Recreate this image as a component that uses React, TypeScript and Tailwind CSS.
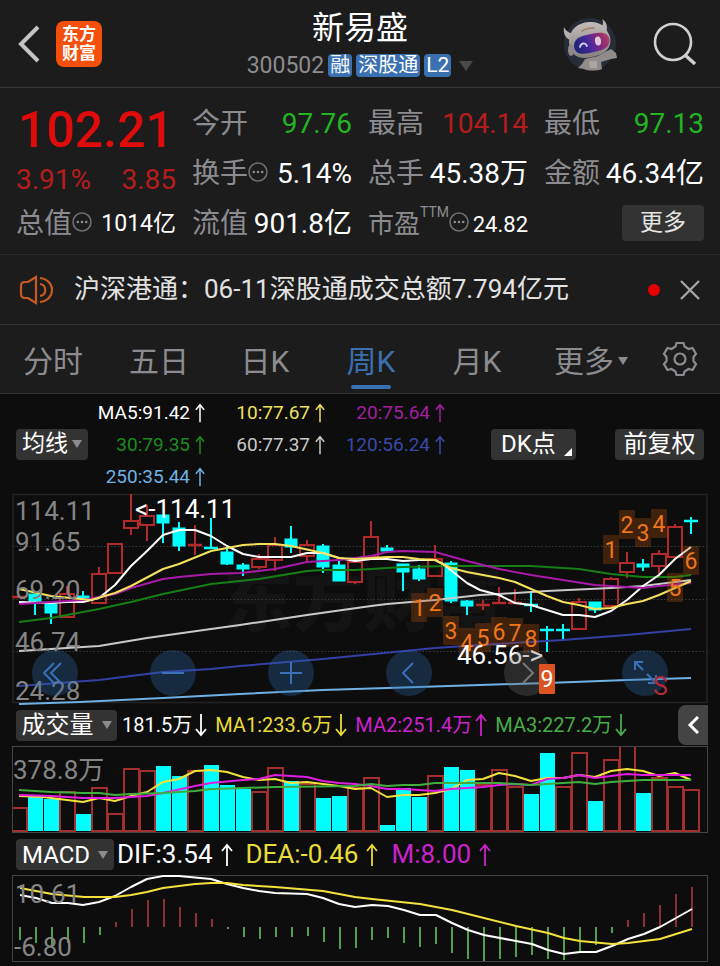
import React from "react";

const UP = "#b32a2a";
const DOWN = "#00ffff";

type Point = [number, number];

// [open/close top, bottom, wick top, wick bottom, rising]
type Candle = [number, number, number, number, boolean];

const candles: Candle[] = [
  [597, 597, 597, 597, true],
  [594, 601, 594, 615, false],
  [604, 613, 602, 624, false],
  [594, 617, 586, 617, true],
  [596, 598, 591, 598, false],
  [574, 603, 567, 603, true],
  [544, 573, 544, 573, true],
  [521, 528, 494, 535, true],
  [516, 525, 505, 541, true],
  [515, 523, 515, 543, false],
  [528, 546, 522, 551, false],
  [545, 545, 525, 555, true],
  [548, 548, 518, 548, false],
  [552, 564, 547, 565, false],
  [565, 569, 563, 576, false],
  [559, 567, 554, 569, true],
  [545, 560, 537, 571, true],
  [539, 547, 526, 553, false],
  [545, 556, 540, 563, true],
  [546, 567, 544, 573, false],
  [565, 581, 561, 581, false],
  [562, 582, 562, 584, true],
  [537, 557, 521, 557, true],
  [548, 551, 545, 553, false],
  [564, 572, 564, 591, false],
  [569, 579, 565, 581, false],
  [559, 576, 545, 576, true],
  [563, 601, 561, 603, false],
  [601, 606, 600, 615, false],
  [605, 605, 600, 610, true],
  [603, 603, 587, 603, true],
  [603, 603, 589, 603, true],
  [605, 605, 591, 612, false],
  [630, 630, 626, 652, false],
  [630, 630, 624, 639, false],
  [602, 629, 598, 629, true],
  [602, 610, 602, 613, false],
  [579, 606, 577, 606, true],
  [563, 572, 552, 578, true],
  [564, 567, 559, 571, false],
  [554, 566, 550, 578, true],
  [527, 557, 524, 557, true],
  [521, 521, 517, 534, false],
];

const priceLines: { color: string; points: Point[] }[] = [
  { color: "#c9c9c9", points: [[19, 651], [51, 649], [99, 646], [147, 638], [211, 629], [240, 625], [307, 615], [371, 606], [387, 604], [435, 600], [480, 595], [499, 594], [547, 591], [611, 588], [643, 586], [691, 580]] },
  { color: "#3440a4", points: [[19, 686], [99, 680], [163, 672], [211, 669], [240, 666], [323, 659], [435, 648], [480, 645], [563, 640], [627, 635], [659, 632], [691, 629]] },
  { color: "#6fb1e4", points: [[19, 704], [80, 702], [163, 698], [240, 694], [323, 690], [387, 688], [480, 685], [547, 683], [627, 680], [691, 678]] },
  { color: "#157f15", points: [[19, 622], [51, 618], [99, 609], [131, 602], [163, 594], [211, 584], [240, 581], [259, 579], [307, 571], [323, 570], [355, 570], [387, 568], [403, 567], [451, 566], [531, 566], [547, 567], [579, 569], [611, 574], [643, 577], [675, 577], [691, 575]] },
  { color: "#fff", points: [[19, 602], [51, 603], [67, 602], [83, 602], [99, 598], [115, 585], [131, 566], [147, 551], [163, 535], [179, 530], [195, 530], [211, 536], [227, 546], [243, 554], [259, 557], [291, 557], [307, 553], [323, 553], [339, 558], [355, 561], [371, 559], [387, 559], [403, 561], [419, 560], [435, 560], [443, 564], [467, 583], [480, 590], [499, 595], [515, 603], [531, 605], [547, 610], [563, 615], [579, 615], [595, 617], [611, 611], [627, 600], [643, 586], [659, 575], [675, 559], [691, 547]] },
  { color: "#a81aa8", points: [[19, 604], [51, 602], [83, 600], [99, 597], [115, 594], [131, 588], [163, 579], [179, 577], [211, 574], [240, 573], [275, 569], [307, 562], [339, 560], [371, 556], [387, 552], [403, 551], [435, 552], [467, 561], [499, 569], [531, 575], [563, 580], [595, 585], [627, 587], [643, 588], [659, 586], [691, 583]] },
  { color: "#f4e25c", points: [[19, 589], [51, 596], [91, 600], [115, 593], [131, 586], [163, 569], [179, 564], [211, 551], [227, 548], [243, 545], [259, 544], [275, 544], [291, 546], [323, 553], [339, 558], [355, 559], [371, 558], [387, 557], [403, 557], [419, 559], [435, 560], [451, 568], [467, 572], [483, 575], [499, 578], [515, 582], [531, 589], [547, 596], [563, 602], [579, 605], [595, 609], [611, 608], [627, 604], [643, 601], [659, 595], [675, 588], [691, 581]] },
];

// [left, top, digit]
const marks: [number, number, string][] = [
  [411, 593, "1"], [427, 588, "2"], [443, 616, "3"], [459, 628, "4"], [475, 623, "5"], [491, 617, "6"],
  [507, 618, "7"], [523, 624, "8"], [603, 535, "1"], [619, 510, "2"], [635, 518, "3"], [651, 509, "4"],
  [667, 573, "5"], [683, 546, "6"],
];

// [top of bar, rising]
const volumes: [number, boolean][] = [
  [808, true], [797, false], [799, false], [792, true], [814, false], [788, true], [814, true], [769, true],
  [771, true], [766, false], [776, false], [771, true], [765, false], [785, false], [789, false], [792, true],
  [768, true], [781, false], [784, true], [798, false], [796, false], [788, true], [778, true], [825, false],
  [788, false], [797, false], [776, true], [767, false], [770, false], [785, true], [770, true], [787, true],
  [794, false], [753, false], [787, true], [753, true], [801, false], [760, true], [740, true], [793, false],
  [778, true], [787, true], [790, true],
];

const volumeLines: { color: string; points: Point[] }[] = [
  { color: "#f4e23c", points: [[19, 796], [43, 797], [67, 800], [83, 802], [99, 798], [115, 801], [131, 796], [147, 792], [163, 782], [179, 779], [195, 771], [211, 770], [227, 772], [243, 777], [259, 780], [275, 779], [291, 783], [307, 782], [323, 784], [339, 786], [355, 789], [371, 788], [387, 797], [403, 795], [419, 795], [435, 793], [451, 789], [467, 780], [483, 779], [499, 773], [515, 776], [531, 781], [547, 778], [563, 778], [579, 775], [595, 777], [611, 771], [627, 769], [643, 771], [659, 776], [675, 773], [691, 780]] },
  { color: "#e01ee0", points: [[19, 795], [51, 796], [83, 798], [115, 798], [147, 796], [163, 793], [195, 786], [211, 783], [243, 780], [259, 779], [275, 775], [291, 776], [307, 777], [323, 781], [339, 783], [355, 784], [371, 786], [387, 789], [403, 789], [435, 791], [451, 789], [467, 788], [483, 787], [499, 785], [515, 784], [531, 785], [547, 779], [563, 778], [579, 775], [595, 778], [627, 774], [643, 775], [691, 775]] },
  { color: "#3fae3f", points: [[19, 790], [51, 792], [83, 793], [99, 793], [115, 795], [131, 794], [163, 793], [195, 791], [211, 789], [243, 788], [275, 787], [355, 786], [371, 784], [387, 786], [403, 785], [419, 785], [435, 783], [499, 783], [531, 785], [547, 784], [579, 782], [595, 784], [611, 782], [643, 780], [691, 780]] },
];

const macdBars = [
  940, 943, 948, 943, 943, 935, 922, 909, 900, 899, 907, 913, 919, 929, 937, 939, 937, 937, 936, 942, 949, 948,
  940, 938, 943, 947, 944, 953, 959, 961, 959, 957, 955, 959, 960, 951, 945, 933, 920, 913, 905, 894, 887,
];

const macdLines: { color: string; points: Point[] }[] = [
  { color: "#fff", points: [[20, 895], [36, 898], [52, 903], [68, 903], [83, 905], [99, 902], [115, 896], [131, 887], [147, 879], [163, 876], [179, 876], [211, 879], [227, 884], [243, 888], [259, 891], [275, 893], [307, 894], [323, 898], [339, 904], [355, 907], [372, 905], [388, 906], [404, 910], [420, 915], [436, 915], [452, 923], [468, 930], [484, 935], [516, 941], [532, 944], [548, 950], [564, 954], [580, 952], [596, 952], [612, 946], [628, 939], [644, 934], [660, 927], [676, 918], [692, 909]] },
  { color: "#f4e23c", points: [[20, 888], [52, 894], [84, 897], [115, 897], [131, 895], [147, 892], [163, 888], [195, 884], [211, 883], [227, 883], [243, 885], [275, 887], [323, 891], [355, 897], [372, 899], [420, 904], [452, 910], [516, 926], [548, 933], [564, 938], [580, 941], [612, 944], [628, 943], [660, 939], [692, 929]] },
];

const barX = (i: number) => 19 + 16 * i;
const toPoints = (points: Point[]) => points.map((p) => p.join(",")).join(" ");

function Lines({ lines }: { lines: { color: string; points: Point[] }[] }) {
  return (
    <>
      {lines.map((l) => (
        <polyline key={l.color} points={toPoints(l.points)} fill="none" stroke={l.color} strokeWidth="2" strokeLinejoin="round" />
      ))}
    </>
  );
}

function Arrow({ down = false, small = false }: { down?: boolean; small?: boolean }) {
  return (
    <svg viewBox="0 0 12 24" className={small ? "h-5 w-[10px]" : "h-6 w-3"} fill="none" stroke="currentColor" strokeWidth="1.8" aria-hidden="true">
      <path d={down ? "M6 1V22M1 16L6 22L11 16" : "M6 23V2M1 8L6 2L11 8"} />
    </svg>
  );
}

function Caret() {
  return (
    <svg viewBox="0 0 10 8" className="h-2 w-[10px] shrink-0" aria-hidden="true">
      <path d="M0 0H10L5 8Z" fill="#8c8c90" />
    </svg>
  );
}

function Dots() {
  return (
    <svg viewBox="0 0 20 20" className="mb-1 h-5 w-5 shrink-0" fill="none" aria-hidden="true">
      <circle cx="10" cy="10" r="9" stroke="#6f6f72" strokeWidth="1.6" />
      <g fill="#8c8c90">
        <circle cx="5.8" cy="10" r="1.3" />
        <circle cx="10" cy="10" r="1.3" />
        <circle cx="14.2" cy="10" r="1.3" />
      </g>
    </svg>
  );
}

function Robot() {
  return (
    <svg viewBox="0 0 56 56" className="h-14 w-14" aria-hidden="true">
      <defs>
        <linearGradient id="visor" x1="0" y1="0.3" x2="1" y2="0">
          <stop offset="0" stopColor="#24247c" />
          <stop offset="0.35" stopColor="#4a2a9c" />
          <stop offset="0.65" stopColor="#8a2a78" />
          <stop offset="1" stopColor="#b8475e" />
        </linearGradient>
        <linearGradient id="shell" x1="0" y1="0" x2="0" y2="1">
          <stop offset="0" stopColor="#c2bcba" />
          <stop offset="1" stopColor="#857f7e" />
        </linearGradient>
      </defs>
      <circle cx="28" cy="28" r="26" fill="#272d38" />
      <path d="M2 11C1 17 3 22 8 24L12 18C7 17 4 15 2 11Z" fill="#b4aeac" />
      <path d="M40 3C45 6 46 11 44 16L37 12C41 10 42 7 40 3Z" fill="#b4aeac" />
      <path d="M7 26C7 13 16 7 27 6C39 5 45 12 48 21C50 32 44 38 30 41C17 44 8 40 7 26Z" fill="url(#shell)" />
      <ellipse cx="9" cy="34" rx="3" ry="6" fill="#8e8988" />
      <path d="M12 29C13 21 20 20 29 18C39 16 45 16 47 22C49 29 44 34 32 36C20 39 12 39 12 29Z" fill="url(#visor)" />
      <path d="M18 31C19 27 23 26 25 30" fill="none" stroke="#d6cef0" strokeWidth="1.8" strokeLinecap="round" />
      <ellipse cx="36" cy="25" rx="3" ry="4.5" fill="#e2c7dc" transform="rotate(-8 36 25)" />
      <path d="M20 15C23 13 28 12 32 12" fill="none" stroke="#a0805f" strokeWidth="1.6" strokeLinecap="round" />
      <path d="M23 43L36 40L43 36L49 33L54 37L55 42L49 43L39 46L40 53C35 55 26 55 22 53L16 52L20 48Z" fill="#918c8a" />
      <path d="M27 45H35V52H28Z" fill="#aba5a3" />
    </svg>
  );
}

function Stat({ label, value, tone = "text-white", small = false, info = false }: { label: string; value: string; tone?: string; small?: boolean; info?: boolean }) {
  return (
    <div className="flex h-[50px] items-center justify-between whitespace-nowrap">
      <dt className="flex items-center text-[28px] text-[#8c8c90]">
        {label}
        {info && <Dots />}
      </dt>
      <dd className={`${tone} ${small ? "text-[23px]" : "text-[28px]"}`}>{value}</dd>
    </div>
  );
}

function Header() {
  return (
    <header className="flex h-[88px] items-center border-b border-[#363636] px-4">
      <div className="flex flex-1 items-center gap-3">
        <button aria-label="返回">
          <svg viewBox="0 0 28 44" className="h-11 w-7" fill="none" stroke="#c4c4c4" strokeWidth="4">
            <path d="M22 5L5 22L22 39" />
          </svg>
        </button>
        <a href="#home" className="flex h-[46px] w-[46px] flex-col items-center justify-center rounded-lg bg-[#f4500c] text-[17px] leading-[19px] font-bold text-white">
          <span>东方</span>
          <span>财富</span>
        </a>
      </div>
      <div className="flex flex-col items-center gap-2">
        <h1 className="text-[32px] leading-9 text-white">新易盛</h1>
        <div className="flex items-center gap-1 text-[20px] leading-6 text-white">
          <span className="text-[23px] text-[#8c8c90]">300502</span>
          <span className="rounded bg-[#3a70b0] px-[2px] leading-[23px]">融</span>
          <span className="rounded bg-[#3a70b0] px-[2px] leading-[23px]">深股通</span>
          <span className="rounded bg-[#3a70b0] px-[2px] text-[21px] leading-[23px]">L2</span>
          <button aria-label="切换" className="ml-1">
            <svg viewBox="0 0 14 10" className="h-[10px] w-[14px]">
              <path d="M0 0H14L7 10Z" fill="#4a4a4a" />
            </svg>
          </button>
        </div>
      </div>
      <div className="flex flex-1 items-center justify-end gap-8">
        <button aria-label="助手">
          <Robot />
        </button>
        <button aria-label="搜索" className="mr-[6px]">
          <svg viewBox="0 0 48 48" className="h-12 w-12" fill="none" stroke="#d0d0d0" strokeWidth="2.6">
            <circle cx="23" cy="22" r="18" />
            <path d="M35 35L45 44" strokeWidth="3.4" />
          </svg>
        </button>
      </div>
    </header>
  );
}

function Quote() {
  return (
    <section className="grid grid-cols-4 gap-x-4 border-b border-[#2b2b2b] px-4 pt-[11px] pb-[5px]">
      <div className="row-span-2 flex flex-col text-[#e00c0c]">
        <strong className="text-center text-[50px] leading-[62px] font-medium">102.21</strong>
        <div className="flex justify-between text-[28px] leading-[38px] text-[#b71c1c]">
          <span>3.91%</span>
          <span>3.85</span>
        </div>
      </div>
      <Stat label="今开" value="97.76" tone="text-[#22b422]" />
      <Stat label="最高" value="104.14" tone="text-[#b71c1c]" />
      <Stat label="最低" value="97.13" tone="text-[#22b422]" />
      <Stat label="换手" value="5.14%" info />
      <Stat label="总手" value="45.38万" />
      <Stat label="金额" value="46.34亿" />
      <Stat label="总值" value="1014亿" small info />
      <Stat label="流值" value="901.8亿" />
      <div className="flex h-[50px] items-center justify-between whitespace-nowrap">
        <dt className="flex items-center text-[26px] text-[#8c8c90]">
          市盈
          <sup className="-top-3 text-[14px]">TTM</sup>
          <Dots />
        </dt>
        <dd className="text-[22px] text-white">24.82</dd>
      </div>
      <div className="flex h-[50px] items-center justify-end pb-[2px]">
        <button className="h-9 w-[82px] rounded bg-[#333] text-[23px] leading-9 text-[#e4e4e4]">更多</button>
      </div>
    </section>
  );
}

function Notice() {
  return (
    <section className="flex h-[70px] items-center border-b border-[#333] px-4 text-[26px] text-[#e2e2e2]">
      <svg viewBox="0 0 40 32" className="mr-[18px] h-8 w-10 shrink-0" fill="none" stroke="#c65a22" strokeWidth="2.2" aria-hidden="true">
        <path d="M20 3V29L12 24H9Q5 24 5 20V12Q5 8 9 8H12Z" />
        <path d="M24 10C31 11 31 21 24 22M24 4C40 6 40 26 24 28" />
      </svg>
      <p className="flex-1 whitespace-nowrap">沪深港通：06-11深股通成交总额7.794亿元</p>
      <i className="mr-5 h-3 w-3 rounded-full bg-[#e60000]" />
      <button aria-label="关闭" className="mr-1">
        <svg viewBox="0 0 20 20" className="h-5 w-5" fill="none" stroke="#a8a8a8" strokeWidth="2.2">
          <path d="M1 1L19 19M19 1L1 19" />
        </svg>
      </button>
    </section>
  );
}

function Gear() {
  return (
    <svg viewBox="0 0 36 36" className="h-9 w-9" fill="none" stroke="#8c8c90" strokeWidth="2.2">
      <path d="M14.5 2H21.5L22.5 5.5L26.5 8L30.5 7L34 13L31.5 16V20L34 23L30.5 29L26.5 28L22.5 30.5L21.5 34H14.5L13.5 30.5L9.5 28L5.5 29L2 23L4.5 20V16L2 13L5.5 7L9.5 8L13.5 5.5Z" />
      <circle cx="18" cy="18" r="5.5" />
    </svg>
  );
}

function Tabs() {
  return (
    <nav className="grid h-[69px] grid-cols-[106fr_106fr_106fr_106fr_106fr_110fr_80fr] border-b border-[#333] text-[30px] text-[#8c8c90]">
      {["分时", "五日", "日K", "周K", "月K"].map((t) =>
        t === "周K" ? (
          <button key={t} className="relative pt-1 text-[#3a70b0]">
            {t}
            <span className="absolute inset-x-0 bottom-1 mx-auto h-1 w-10 rounded-full bg-[#3a70b0]" />
          </button>
        ) : (
          <button key={t} className="pt-1">{t}</button>
        ),
      )}
      <button className="flex items-center justify-center gap-1 pt-1 pl-3">
        更多
        <Caret />
      </button>
      <button aria-label="设置" className="flex items-center justify-center">
        <Gear />
      </button>
    </nav>
  );
}

const averages: [string, string][] = [
  ["MA5:91.42", "text-white"],
  ["10:77.67", "text-[#f0e060]"],
  ["20:75.64", "text-[#a020a0]"],
  ["30:79.35", "text-[#1e8a1e]"],
  ["60:77.37", "text-[#c8c8c8]"],
  ["120:56.24", "text-[#3a48a8]"],
  ["250:35.44", "text-[#6fb1e4]"],
];

function Averages() {
  return (
    <div className="flex h-[100px] items-center px-4">
      <button className="flex h-[31px] w-[72px] items-center justify-center gap-1 rounded bg-[#333] text-[23px] whitespace-nowrap text-white">
        均线
        <Caret />
      </button>
      <ul className="ml-[9px] grid grid-cols-[108px_120px_120px] pt-[2px] text-[19px] leading-8">
        {averages.map(([text, tone]) => (
          <li key={text} className={`${tone} flex items-center justify-end gap-[5px] whitespace-nowrap`}>
            {text}
            <Arrow small />
          </li>
        ))}
      </ul>
      <div className="ml-auto flex gap-[39px] text-[24px] whitespace-nowrap text-white">
        <button className="flex h-[31px] w-[85px] items-center gap-2 rounded bg-[#333] pl-[10px]">
          DK点
          <svg viewBox="0 0 8 8" className="mt-4 h-2 w-2 shrink-0">
            <path d="M8 0V8H0Z" fill="#fff" />
          </svg>
        </button>
        <button className="flex h-[31px] w-[89px] items-center justify-center rounded bg-[#333]">前复权</button>
      </div>
    </div>
  );
}

const tools: { name: string; path: string; muted?: boolean }[] = [
  { name: "最早", path: "M22 13L12 23L22 33M29 13L19 23L29 33" },
  { name: "缩小", path: "M12 23H34" },
  { name: "放大", path: "M12 23H34M23 12V34" },
  { name: "左移", path: "M27 13L17 23L27 33" },
  { name: "右移", path: "M19 13L29 23L19 33", muted: true },
  { name: "全屏", path: "M13 20V12H21M13 12L21 20M34 25V33H26M34 33L25 24" },
];

function PriceChart() {
  return (
    <div className="relative mx-3">
      <svg viewBox="12 494 696 210" className="block h-auto w-full overflow-visible" fontFamily="Roboto, 'Noto Sans CJK SC', sans-serif" fontSize="26">
        <text x="223" y="626" fontSize="70" fontWeight="900" fill="#141414">东方财富</text>
        <rect x="13" y="494.5" width="694" height="208" fill="none" stroke="#242424" strokeWidth="1.5" />
        <path d="M13 546.5H707M13 599.5H707M13 651.5H707" stroke="#3a3a3a" strokeDasharray="1.5 2" />
        {candles.map(([top, bottom, high, low, up], i) => {
          const x = barX(i);
          const color = up ? UP : DOWN;
          return (
            <g key={i} stroke={color} strokeWidth="2">
              {high < top && <path d={`M${x} ${high}V${top}`} />}
              {low > bottom && <path d={`M${x} ${bottom}V${low}`} />}
              {top === bottom ? (
                <path d={`M${x - 7} ${top}H${x + 7}`} strokeWidth="2.5" />
              ) : (
                <rect x={up ? x - 7 : x - 6} y={top} width={up ? 14 : 12} height={bottom - top} fill={up ? "none" : DOWN} strokeWidth={up ? 2 : 1} />
              )}
            </g>
          );
        })}
        <Lines lines={priceLines} />
        <g fill="#858585">
          <text x="15" y="520">114.11</text>
          <text x="15" y="551">91.65</text>
          <text x="15" y="599">69.20</text>
          <text x="15" y="651">46.74</text>
          <text x="15" y="700">24.28</text>
        </g>
        {marks.map(([x, y, digit]) => (
          <g key={`${x}-${y}`}>
            <rect x={x} y={y} width="16" height="29" rx="1" fill="#b65008" fillOpacity="0.3" />
            <text x={x + 8} y={y + 23} textAnchor="middle" fontSize="23" fill="#ee761c">{digit}</text>
          </g>
        ))}
        <text x="135" y="518" fill="#fff">&lt;-114.11</text>
        <text x="457" y="664" fill="#fff">46.56-&gt;</text>
      </svg>
      <div className="absolute right-10 bottom-2 left-5 flex justify-between">
        {tools.map((t) => (
          <button key={t.name} aria-label={t.name} className={`h-[46px] w-[46px] rounded-full ${t.muted ? "bg-[#66666655]" : "bg-[#2a66a855]"}`}>
            <svg viewBox="0 0 46 46" className="h-full w-full" fill="none" stroke={t.muted ? "#77777a" : "#3a70b8"} strokeWidth="2">
              <path d={t.path} />
            </svg>
          </button>
        ))}
      </div>
      <svg viewBox="12 494 696 210" className="pointer-events-none absolute inset-0 h-full w-full" fontFamily="Roboto, sans-serif" fontSize="23">
        <rect x="539" y="664" width="16" height="30" rx="1" fill="#dc5220" />
        <text x="547" y="687" textAnchor="middle" fill="#fff">9</text>
        <text x="653" y="695" fontSize="25" fill="#b32a36">S</text>
      </svg>
    </div>
  );
}

function VolumeHeader() {
  return (
    <div className="mr-3 ml-4 flex h-[42px] items-center text-[20px] whitespace-nowrap">
      <button className="flex h-[31px] w-[101px] items-center justify-center gap-2 rounded bg-[#333] text-[24px] text-white">
        成交量
        <Caret />
      </button>
      <div className="ml-[5px] flex gap-2">
        <span className="flex items-center gap-[3px] text-white">181.5万<Arrow down /></span>
        <span className="flex items-center gap-[3px] text-[#e8dc38]">MA1:233.6万<Arrow down /></span>
        <span className="flex items-center gap-[3px] text-[#cc22cc]">MA2:251.4万<Arrow /></span>
        <span className="flex items-center gap-[3px] text-[#48ac48]">MA3:227.2万<Arrow down /></span>
      </div>
      <button aria-label="展开" className="ml-auto flex h-10 w-[30px] items-center justify-center rounded-l-lg bg-[#444]">
        <svg viewBox="0 0 12 18" className="h-[18px] w-3" fill="none" stroke="#fff" strokeWidth="3">
          <path d="M11 1L3 9L11 17" />
        </svg>
      </button>
    </div>
  );
}

function VolumeChart() {
  return (
    <svg viewBox="12 746 696 88" className="mx-3 block h-auto w-[calc(100%-24px)]" fontFamily="Roboto, 'Noto Sans CJK SC', sans-serif" fontSize="26">
      <text x="13" y="779" fill="#858585">378.8万</text>
      {volumes.map(([top, up], i) => (
        <rect key={i} x={barX(i) - 7} y={top} width="15" height={831 - top} fill={up ? "none" : DOWN} stroke={up ? "#a32e2e" : "none"} strokeWidth="2" />
      ))}
      <Lines lines={volumeLines} />
      <rect x="12.5" y="746.5" width="695" height="86" fill="none" stroke="#4a4444" />
    </svg>
  );
}

function MacdHeader() {
  return (
    <div className="ml-4 flex h-[41px] items-center text-[26px] whitespace-nowrap">
      <button className="flex h-[31px] w-[98px] items-center justify-center gap-2 rounded bg-[#333] text-[24px] text-white">
        MACD
        <Caret />
      </button>
      <div className="ml-[3px] flex gap-[13px]">
        <span className="flex items-center gap-2 text-white">DIF:3.54<Arrow /></span>
        <span className="flex items-center gap-2 text-[#e8dc38]">DEA:-0.46<Arrow /></span>
        <span className="flex items-center gap-2 text-[#cc22cc]">M:8.00<Arrow /></span>
      </div>
    </div>
  );
}

function MacdChart() {
  return (
    <svg viewBox="12 875 696 88" className="mx-3 block h-auto w-[calc(100%-24px)]" fontFamily="Roboto, sans-serif" fontSize="26">
      <rect x="12.5" y="875.5" width="695" height="86" fill="none" stroke="#444" />
      {macdBars.map((end, i) => (
        <path key={i} d={`M${barX(i) + 1} 927V${end}`} stroke={end < 927 ? "#8e2f2f" : "#4f9e4f"} strokeWidth="2" />
      ))}
      <Lines lines={macdLines} />
      <g fill="#858585">
        <text x="15" y="903">10.61</text>
        <text x="14" y="956">-6.80</text>
      </g>
    </svg>
  );
}

export default function App() {
  return (
    <main className="min-h-screen bg-[#0d0d0d] font-[Roboto,'Noto_Sans_CJK_SC',sans-serif]">
      <div className="bg-[#1c1c1c]">
        <Header />
        <Quote />
        <Notice />
        <Tabs />
      </div>
      <Averages />
      <PriceChart />
      <VolumeHeader />
      <VolumeChart />
      <MacdHeader />
      <MacdChart />
    </main>
  );
}
